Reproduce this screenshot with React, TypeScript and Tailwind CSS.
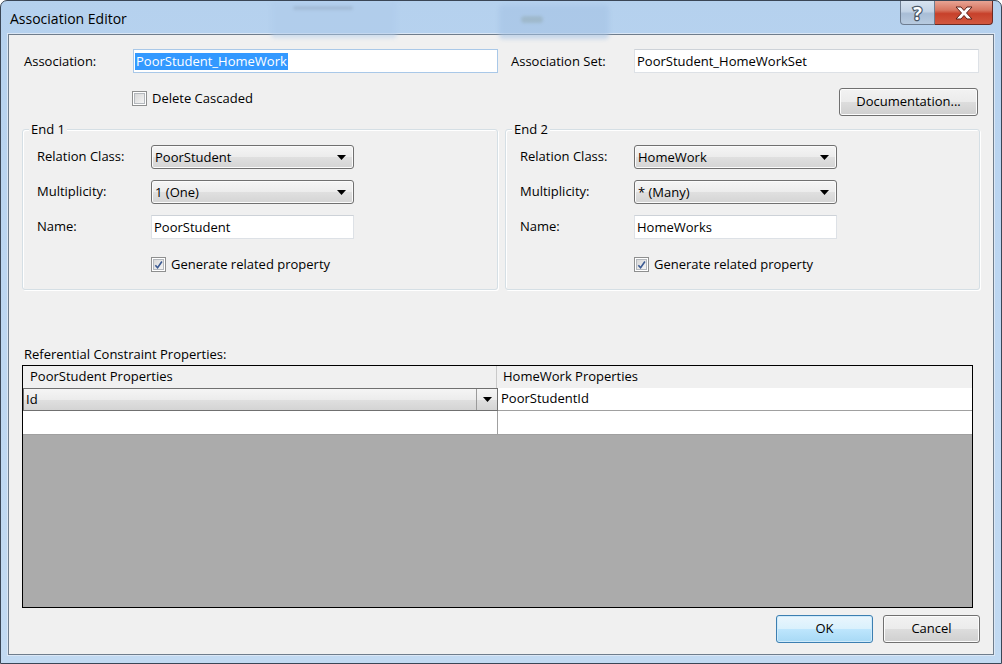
import React from "react";

const F = "font-['Open_Sans',_'Noto_Sans',_sans-serif]";

function Triangle() {
  return (
    <svg width="9" height="5" viewBox="0 0 9 5">
      <path d="M0 0 L9 0 L4.5 5 Z" fill="#000" />
    </svg>
  );
}

function Combo({ text, w }: { text: string; w: string }) {
  return (
    <div
      className={`${w} h-[24px] rounded-[3px] border border-[#707070] bg-[linear-gradient(180deg,#f5f5f5_0%,#ececec_50%,#e0e0e0_50%,#d4d4d4_100%)] flex items-center pl-[3px] pr-[7px] shadow-[inset_0_0_0_1px_#fbfbfb]`}
    >
      <span className="text-[13px] leading-none text-black">{text}</span>
      <span className="ml-auto flex items-center">
        <Triangle />
      </span>
    </div>
  );
}

function TextBox({ text, w, focused }: { text: string; w: string; focused?: boolean }) {
  return (
    <div
      className={`${w} h-[24px] border bg-white flex items-center pl-[1px] ${
        focused ? "border-[#a9c8e8]" : "border-[#dde1e6] border-t-[#cdd2d8]"
      }`}
    >
      {focused ? (
        <span className="bg-[#3399ff] text-white text-[13px] leading-[17px] px-[1px]">{text}</span>
      ) : (
        <span className="text-[13px] leading-none text-black pl-[1px]">{text}</span>
      )}
    </div>
  );
}

function CheckBox({ checked }: { checked?: boolean }) {
  return (
    <div className="w-[15px] h-[15px] border border-[#8e8f8f] bg-white p-[1px] shrink-0">
      <div className="w-full h-full border border-[#b4b8bd] bg-[linear-gradient(135deg,#d8d8d8,#f4f4f4)] flex items-center justify-center">
        {checked && (
          <svg width="10" height="10" viewBox="0 0 10 10">
            <path d="M1.5 5.2 L4 8 L8.8 1.2" fill="none" stroke="#3b5a92" strokeWidth="1.8" />
          </svg>
        )}
      </div>
    </div>
  );
}

function Button({ label, w, primary }: { label: string; w: string; primary?: boolean }) {
  return (
    <div
      className={`${w} h-[28px] rounded-[3px] border flex items-center justify-center text-[13px] text-black ${
        primary
          ? "border-[#3c7fb1] bg-[linear-gradient(180deg,#eaf6fd_0%,#d9f0fc_50%,#bee6fd_50%,#a7d9f5_100%)] shadow-[inset_0_0_0_1px_#cfeafb]"
          : "border-[#707070] bg-[linear-gradient(180deg,#f2f2f2_0%,#ebebeb_50%,#dddddd_50%,#cfcfcf_100%)] shadow-[inset_0_0_0_1px_#fcfcfc]"
      }`}
    >
      {label}
    </div>
  );
}

function Group({
  title,
  w,
  relClass,
  mult,
  name,
}: {
  title: string;
  w: string;
  relClass: string;
  mult: string;
  name: string;
}) {
  return (
    <div className={`${w} pt-[7px] relative`}>
      <span className="absolute left-[7px] top-0 bg-[#f0f0f0] px-[2px] text-[13px] leading-[15px] text-black">
        {title}
      </span>
      <div className="h-[161px] rounded-[3px] border border-[#d5dfe5] shadow-[inset_1px_1px_0_#ffffff,1px_1px_0_#ffffff] pl-[14px] pt-[15px] flex flex-col">
        <div className="flex items-center h-[24px]">
          <span className="w-[114px] text-[13px]">Relation Class:</span>
          <Combo text={relClass} w="w-[203px]" />
        </div>
        <div className="flex items-center h-[24px] mt-[11px]">
          <span className="w-[114px] text-[13px]">Multiplicity:</span>
          <Combo text={mult} w="w-[203px]" />
        </div>
        <div className="flex items-center h-[24px] mt-[11px]">
          <span className="w-[114px] text-[13px]">Name:</span>
          <TextBox text={name} w="w-[203px]" />
        </div>
        <div className="flex items-center mt-[18px] ml-[114px] gap-[5px]">
          <CheckBox checked />
          <span className="text-[13px] leading-none">Generate related property</span>
        </div>
      </div>
    </div>
  );
}

export default function App() {
  return (
    <div
      className={`${F} w-[1002px] h-[664px] relative overflow-hidden rounded-t-[7px] border border-[#3a4656] bg-[linear-gradient(180deg,#b5d1ee_0%,#bcd6f1_40%,#c2daf2_100%)] flex flex-col text-black`}
    >
      {/* Title bar */}
      <div className="h-[33px] shrink-0 relative flex items-start">
        {/* blurred background glimpses */}
        <div className="absolute left-[270px] top-[1px] w-[126px] h-[36px] rounded-[4px] bg-[#aecaea] opacity-50 blur-[2px]" />
        <div className="absolute left-[292px] top-[5px] w-[60px] h-[4px] rounded bg-[#7a8a9c] opacity-25 blur-[1.5px]" />
        <div className="absolute left-[498px] top-[4px] w-[110px] h-[34px] rounded-[4px] bg-[#a4c2e4] opacity-55 blur-[2px]" />
        <div className="absolute left-[520px] top-[15px] w-[22px] h-[7px] rounded bg-[#7a8c7a] opacity-25 blur-[1.5px]" />

        <span className="relative ml-[9px] mt-[9px] text-[14px] leading-[18px] text-black">
          Association Editor
        </span>
        <div className="relative ml-auto mr-[8px] flex">
          <div className="w-[35px] h-[24px] rounded-bl-[4px] border border-t-0 border-[#6d7d91] bg-[linear-gradient(180deg,#d7e3f0_0%,#c3d3e6_45%,#a8bdd6_55%,#b8cbe0_100%)] flex items-center justify-center">
            <span className="text-[18px] font-bold leading-none text-white [-webkit-text-stroke:2.5px_#4a5868] [paint-order:stroke_fill]">
              ?
            </span>
          </div>
          <div className="w-[58px] h-[24px] rounded-br-[4px] border border-t-0 border-l-0 border-[#6b2a22] bg-[linear-gradient(180deg,#e8a494_0%,#d77560_40%,#c7412b_55%,#d2583f_100%)] flex items-center justify-center">
            <svg width="18" height="14" viewBox="0 0 18 14">
              <path
                d="M1 1 H6 L9 4.5 L12 1 H17 L11.5 7 L17 13 H12 L9 9.5 L6 13 H1 L6.5 7 Z"
                fill="#ffffff"
                stroke="#5a2018"
                strokeWidth="1"
              />
            </svg>
          </div>
        </div>
      </div>

      {/* Client area */}
      <div className="px-[7px] pb-[8px] flex-1 flex">
        <div className="flex-1 border border-[#6f7d8c] bg-[#f0f0f0] pl-[13px] pr-[13px] pt-[14px] flex flex-col shadow-[0_0_0_1px_#dbe7f5]">
          {/* Row 1 */}
          <div className="flex items-center h-[24px]">
            <span className="ml-[2px] w-[109px] text-[13px] mt-[1px]">Association:</span>
            <TextBox text="PoorStudent_HomeWork" w="w-[365px]" focused />
            <span className="ml-[13px] w-[123px] text-[13px] mt-[1px]">Association Set:</span>
            <TextBox text="PoorStudent_HomeWorkSet" w="w-[345px]" />
          </div>

          {/* Row 2 */}
          <div className="flex items-start h-[28px] mt-[15px]">
            <div className="flex items-center gap-[5px] ml-[110px] mt-[3px]">
              <CheckBox />
              <span className="text-[13px] leading-none">Delete Cascaded</span>
            </div>
            <div className="ml-auto mr-[2px]">
              <Button label="Documentation..." w="w-[139px]" />
            </div>
          </div>

          {/* Groups */}
          <div className="flex mt-[6px] gap-[7px]">
            <Group title="End 1" w="w-[476px]" relClass="PoorStudent" mult="1 (One)" name="PoorStudent" />
            <Group title="End 2" w="w-[475px]" relClass="HomeWork" mult="* (Many)" name="HomeWorks" />
          </div>

          {/* Referential */}
          <span className="ml-[2px] mt-[55px] text-[13px] leading-[18px]">
            Referential Constraint Properties:
          </span>
          <div className="mt-[2px] w-[951px] h-[243px] border border-black bg-[#ababab] flex flex-col">
            <div className="h-[22px] bg-[#f0f0f0] flex">
              <div className="w-[474px] pl-[7px] flex items-center text-[13px] border-r border-[#c9c9c9]">
                PoorStudent Properties
              </div>
              <div className="flex-1 pl-[6px] flex items-center text-[13px]">HomeWork Properties</div>
            </div>
            <div className="h-[23px] flex bg-white border-b border-[#a0a0a0]">
              <div className="w-[475px] h-[23px] border border-[#707070] bg-[linear-gradient(180deg,#f5f5f5_0%,#ececec_50%,#e0e0e0_50%,#d4d4d4_100%)] flex items-center">
                <span className="pl-[2px] text-[13px] leading-none">Id</span>
                <div className="ml-auto w-[21px] h-full border-l border-[#9a9a9a] flex items-center justify-center">
                  <Triangle />
                </div>
              </div>
              <div className="flex-1 pl-[3px] flex items-center text-[13px]">PoorStudentId</div>
            </div>
            <div className="h-[24px] flex bg-white border-b border-[#a0a0a0]">
              <div className="w-[475px] border-r border-[#a0a0a0]" />
              <div className="flex-1" />
            </div>
          </div>

          {/* Buttons */}
          <div className="flex justify-end gap-[10px] mt-[7px]">
            <Button label="OK" w="w-[97px]" primary />
            <Button label="Cancel" w="w-[97px]" />
          </div>
        </div>
      </div>
    </div>
  );
}
